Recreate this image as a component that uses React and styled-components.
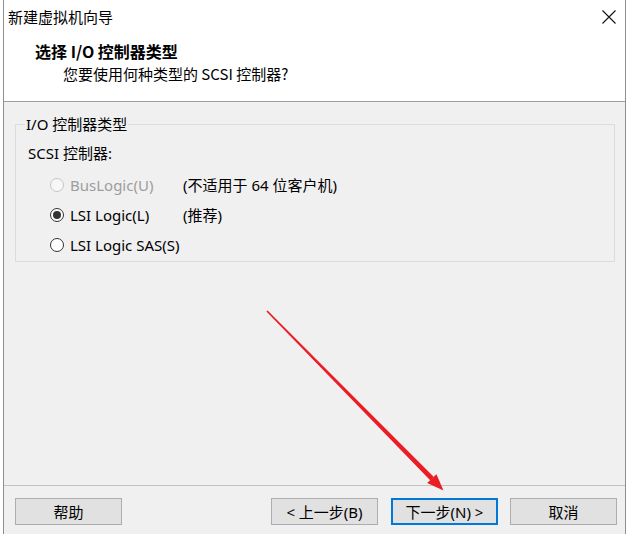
import React from "react";
import styled, { createGlobalStyle } from "styled-components";

const GlobalStyle = createGlobalStyle`
  html, body {
    margin: 0;
    padding: 0;
    background: #ffffff;
  }
  body {
    font-family: "Noto Sans", "Noto Sans CJK SC", sans-serif;
    font-size: 15px;
    color: #000;
  }
`;

/* dialog frame */
const Window = styled.div`
  position: relative;
  box-sizing: border-box;
  margin-left: 3px;
  width: 623px;
  height: 534px;
  display: flex;
  flex-direction: column;
  background: #f0f0f0;
  border-left: 1px solid #8f8f8f;
  border-right: 1px solid #8f8f8f;
  overflow: hidden;
`;

const TitleBar = styled.div`
  height: 34px;
  display: flex;
  align-items: center;
  justify-content: space-between;
  padding: 0 8px 0 4px;
  background: #fff;
`;

const TitleText = styled.span`
  font-family: "Noto Sans CJK SC", sans-serif;
  font-size: 15px;
  line-height: 20px;
`;

const CloseButton = styled.button`
  width: 16px;
  height: 16px;
  padding: 0;
  border: 0;
  background: transparent;
  display: flex;
  align-items: center;
  justify-content: center;
`;

const Header = styled.div`
  background: #fff;
  padding: 7px 0 17px 31px;
  border-bottom: 1px solid #a0a0a0;
`;

const Heading = styled.div`
  font-family: "Noto Sans CJK SC", serif;
  font-weight: 700;
  font-size: 16px;
  line-height: 20px;
`;

const SubHeading = styled.div`
  margin: 3px 0 0 28px;
  font-family: "Noto Sans CJK SC", sans-serif;
  font-size: 15px;
  line-height: 20px;
`;

const Body = styled.div`
  flex: 1;
  padding: 13px 10px 0 11px;
`;

const GroupBox = styled.fieldset`
  margin: 0;
  padding: 10px 10px 1px 10px;
  border: 1px solid #dcdcdc;
  border-radius: 0;
`;

const GroupLegend = styled.legend`
  padding: 0 1px;
  margin-left: -1px;
  font-size: 15px;
  line-height: 18px;
`;

const FieldLabel = styled.div`
  margin-left: 2px;
  line-height: 20px;
`;

const OptionList = styled.div`
  margin: 7px 0 0 24px;
  display: grid;
  grid-template-columns: 133px auto;
  grid-auto-rows: 30px;
  align-items: center;
`;

const OptionLabel = styled.label`
  display: flex;
  align-items: center;
  gap: 6px;
  color: ${(p) => (p.$disabled ? "#9d9d9d" : "#000")};
  line-height: 20px;
`;

const Radio = styled.input.attrs({ type: "radio" })`
  appearance: none;
  margin: 0;
  width: 14px;
  height: 14px;
  border-radius: 50%;
  box-sizing: border-box;
  border: 1px solid ${(p) => (p.disabled ? "#c5c5c5" : "#333")};
  background: ${(p) => (p.disabled ? "#f7f7f7" : "#fff")};
  display: grid;
  place-items: center;
  &:checked::after {
    content: "";
    width: 8px;
    height: 8px;
    border-radius: 50%;
    background: #333;
  }
`;

const Note = styled.span`
  line-height: 20px;
`;

const Footer = styled.div`
  display: flex;
  align-items: center;
  padding: 12px 8px 9px 11px;
  border-top: 1px solid #c2c2c2;
`;

const Spacer = styled.div`
  flex: 1;
`;

const Button = styled.button`
  box-sizing: border-box;
  width: 107px;
  height: 27px;
  margin-left: ${(p) => p.$gap || 0}px;
  padding: 0;
  font-family: "Noto Sans", "Noto Sans CJK SC", sans-serif;
  font-size: 15px;
  color: #000;
  background: #e1e1e1;
  border: ${(p) => (p.$primary ? "2px solid #0078d7" : "1px solid #adadad")};
  border-radius: 0;
`;

/* red annotation arrow drawn on top */
const Annotation = styled.svg`
  position: absolute;
  left: -4px;
  top: 0;
  width: 627px;
  height: 534px;
  pointer-events: none;
`;

const options = [
  { id: "bus", label: "BusLogic(U)", note: "(不适用于 64 位客户机)", disabled: true },
  { id: "lsi", label: "LSI Logic(L)", note: "(推荐)" },
  { id: "sas", label: "LSI Logic SAS(S)", note: "" },
];

export default function App() {
  const [value, setValue] = React.useState("lsi");

  return (
    <>
      <GlobalStyle />
      <Window>
        <TitleBar>
          <TitleText>新建虚拟机向导</TitleText>
          <CloseButton aria-label="关闭">
            <svg width="14" height="14" viewBox="0 0 14 14">
              <path d="M0.5 0.5 L13.5 13.5 M13.5 0.5 L0.5 13.5" stroke="#111" strokeWidth="1.1" />
            </svg>
          </CloseButton>
        </TitleBar>
        <Header>
          <Heading>选择 I/O 控制器类型</Heading>
          <SubHeading>您要使用何种类型的 SCSI 控制器?</SubHeading>
        </Header>
        <Body>
          <GroupBox>
            <GroupLegend>I/O 控制器类型</GroupLegend>
            <FieldLabel>SCSI 控制器:</FieldLabel>
            <OptionList>
              {options.map((o) => (
                <React.Fragment key={o.id}>
                  <OptionLabel $disabled={o.disabled}>
                    <Radio
                      name="scsi"
                      disabled={o.disabled}
                      checked={value === o.id}
                      onChange={() => setValue(o.id)}
                    />
                    {o.label}
                  </OptionLabel>
                  <Note>{o.note}</Note>
                </React.Fragment>
              ))}
            </OptionList>
          </GroupBox>
        </Body>
        <Footer>
          <Button>帮助</Button>
          <Spacer />
          <Button>&lt; 上一步(B)</Button>
          <Button $primary $gap={13}>下一步(N) &gt;</Button>
          <Button $gap={12}>取消</Button>
        </Footer>
        <Annotation viewBox="0 0 627 534">
          <polygon
            points="266.4,311.6 267.6,310.4 433.6,476.8 430.4,480.4"
            fill="#ec1c24"
          />
          <polygon points="443.5,490.5 427.2,483.0 436.4,474.2" fill="#ec1c24" />
        </Annotation>
      </Window>
    </>
  );
}
